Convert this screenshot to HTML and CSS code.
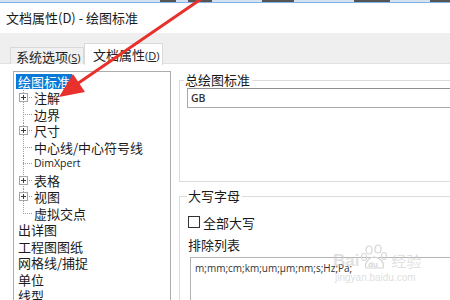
FILE: index.html
```html
<!DOCTYPE html>
<html lang="zh-CN">
<head>
<meta charset="utf-8">
<title>文档属性(D) - 绘图标准</title>
<link rel="stylesheet" href="styles.css">
</head>
<body>
<div class="topstrip">
  <span class="frag f1"></span><span class="frag f2"></span><span class="frag f3"></span><span class="frag f4"></span><span class="frag f5"></span>
</div>
<div class="titlebar">文档属性(D) - 绘图标准</div>
<div class="tabband">
  <div class="tab">系统选项<span class="acc">(<u>S</u>)</span></div>
  <div class="tab active">文档属性<span class="acc">(<u>D</u>)</span></div>
</div>
<div class="content">
  <div class="tree">
    <div class="row top"><span class="lbl sel">绘图标准</span></div>
    <div class="row child"><span class="twig"><span class="pm"></span></span><span class="lbl">注解</span></div>
    <div class="row child"><span class="twig"></span><span class="lbl">边界</span></div>
    <div class="row child"><span class="twig"><span class="pm"></span></span><span class="lbl">尺寸</span></div>
    <div class="row child"><span class="twig"></span><span class="lbl">中心线/中心符号线</span></div>
    <div class="row child"><span class="twig"></span><span class="lbl latin">DimXpert</span></div>
    <div class="row child"><span class="twig"><span class="pm"></span></span><span class="lbl">表格</span></div>
    <div class="row child"><span class="twig"><span class="pm"></span></span><span class="lbl">视图</span></div>
    <div class="row child"><span class="twig last"></span><span class="lbl">虚拟交点</span></div>
    <div class="row top"><span class="lbl">出详图</span></div>
    <div class="row top"><span class="lbl">工程图图纸</span></div>
    <div class="row top"><span class="lbl">网格线/捕捉</span></div>
    <div class="row top"><span class="lbl">单位</span></div>
    <div class="row top"><span class="lbl">线型</span></div>
  </div>
  <div class="panel">
    <fieldset class="group g1">
      <legend>总绘图标准</legend>
      <div class="field">GB</div>
    </fieldset>
    <fieldset class="group g2">
      <legend>大写字母</legend>
      <div class="check"><span class="box"></span><span>全部大写</span></div>
      <div class="caption">排除列表</div>
      <div class="memo">m;mm;cm;km;um;μm;nm;s;Hz;Pa;</div>
    </fieldset>
  </div>
</div>

<div class="watermark">
  <div class="wm-line"><span class="wm-bai">Bai</span><svg class="paw" width="30" height="26" viewBox="0 0 30 26"><g fill="none" stroke="#d6d6d6" stroke-width="1.2"><ellipse cx="9" cy="6" rx="3" ry="4"/><ellipse cx="18" cy="5" rx="3" ry="4"/><ellipse cx="4" cy="13" rx="2.5" ry="3.5"/><ellipse cx="24" cy="12" rx="2.5" ry="3.5"/><path d="M6 24 C4 18 10 13 14 13 C19 13 25 18 23 24 Z"/></g><text x="8" y="23" font-size="8" fill="#d6d6d6" font-family="Liberation Sans, sans-serif" font-weight="bold">du</text></svg><span class="wm-cn">经验</span></div>
  <div class="wm-url">jingyan.baidu.com</div>
</div>

<svg class="arrow" width="450" height="300" viewBox="0 0 450 300">
  <line x1="204" y1="-3" x2="77" y2="84" stroke="#e8302c" stroke-width="3" stroke-linecap="round"/>
  <polygon points="59,97 85,92 73,74" fill="#e8302c"/>
</svg>
</body>
</html>
```

FILE: styles.css
```css
html, body {
  margin: 0;
  padding: 0;
}
body {
  width: 450px;
  height: 300px;
  overflow: hidden;
  position: relative;
  background: #ffffff;
  font-family: "Noto Sans CJK SC", "Noto Sans", sans-serif;
  color: #1a1a1a;
}

.topstrip {
  height: 2px;
  background: #d3e2f2;
  border-bottom: 1px solid #86b3e3;
  display: flex;
  padding-left: 150px;
}
.frag {
  display: block;
  height: 2px;
  background: #555;
}
.f1 { width: 20px; margin-left: 10px; }
.f2 { width: 30px; margin-left: 12px; }
.f3 { width: 40px; margin-left: 50px; }
.f4 { width: 45px; margin-left: 60px; }
.f5 { width: 25px; margin-left: 40px; }

.titlebar {
  height: 30px;
  line-height: 30px;
  padding-left: 6px;
  font-size: 13px;
  color: #1a1a1a;
}

.tabband {
  height: 30px;
  background: #efefef;
  border-bottom: 1px solid #e2e2e2;
  display: flex;
  align-items: flex-end;
  padding-left: 10px;
}
.tab {
  box-sizing: border-box;
  height: 17px;
  width: 74px;
  margin-bottom: -1px;
  border: 1px solid #d9d9d9;
  border-bottom: none;
  background: #f0f0f0;
  font-size: 13px;
  line-height: 18px;
  padding-left: 5px;
  color: #222;
  white-space: nowrap;
}
.tab.active {
  height: 22px;
  width: 79px;
  background: #ffffff;
  line-height: 21px;
  padding-left: 8px;
  margin-bottom: -2px;
}
.acc {
  font-family: "Open Sans", "Liberation Sans", sans-serif;
  font-size: 11px;
}

.content {
  display: flex;
  height: 236px;
  background: #ffffff;
}

.tree {
  box-sizing: border-box;
  margin-left: 13px;
  margin-top: 7px;
  width: 158px;
  height: 260px;
  border: 1px solid #acacac;
  background: #ffffff;
  padding-top: 1px;
  flex: none;
}
.row {
  display: flex;
  align-items: center;
  height: 16.5px;
  font-size: 13px;
  color: #1a1a1a;
  white-space: nowrap;
}
.row.top { padding-left: 2px; }
.row.child { padding-left: 5px; }
.lbl {
  line-height: 15px;
  padding: 0 2px;
}
.lbl.sel {
  background: #0a78d7;
  color: #ffffff;
}
.lbl.latin {
  font-family: "Open Sans", "Liberation Sans", sans-serif;
  font-size: 10.5px;
}
.twig {
  width: 13px;
  align-self: stretch;
  flex: none;
  display: flex;
  align-items: center;
  background-image:
    repeating-linear-gradient(to bottom, #9c9c9c 0 1px, transparent 1px 2px),
    repeating-linear-gradient(to right, #9c9c9c 0 1px, transparent 1px 2px);
  background-size: 1px 100%, 9px 1px;
  background-position: 4px 0, 4px 50%;
  background-repeat: no-repeat;
}
.twig.last {
  background-size: 1px 50%, 9px 1px;
}
.pm {
  box-sizing: border-box;
  width: 9px;
  height: 9px;
  border: 1px solid #a5a5a5;
  background:
    linear-gradient(#3c3c3c, #3c3c3c) center / 5px 1px no-repeat,
    linear-gradient(#3c3c3c, #3c3c3c) center / 1px 5px no-repeat,
    #ffffff;
}

.panel {
  flex: 1;
  padding-left: 8px;
  display: flex;
  flex-direction: column;
}
.group {
  margin: 0 -30px 0 0;
  border: 1px solid #dcdcdc;
  padding: 1px 0 0 7px;
  min-width: 0;
}
.group legend {
  font-size: 13px;
  line-height: 14px;
  padding: 0 2px 0 1px;
  color: #1a1a1a;
}
.g1 {
  margin-top: 9px;
  padding-bottom: 73px;
}
.g1 legend { margin-left: -3px; }
.field {
  box-sizing: border-box;
  height: 20px;
  border: 1px solid #a8a8a8;
  border-top-color: #8f8f8f;
  font-family: "Open Sans", "Liberation Sans", sans-serif;
  font-size: 10.5px;
  font-weight: 600;
  color: #333;
  line-height: 18px;
  padding-left: 3px;
}
.g2 {
  margin-top: 7px;
  padding-left: 8px;
  height: 120px;
}
.g2 legend { margin-left: -1px; }
.check {
  display: flex;
  align-items: center;
  height: 16px;
  margin-top: 10px;
  font-size: 13px;
  gap: 3px;
}
.box {
  box-sizing: border-box;
  width: 12px;
  height: 12px;
  border: 1px solid #333;
  background: #fff;
}
.caption {
  margin-top: 7px;
  height: 16px;
  line-height: 16px;
  font-size: 13px;
}
.memo {
  margin-top: 4px;
  margin-left: 2px;
  height: 60px;
  border: 1px solid #b4b4b4;
  border-right: none;
  font-family: "Open Sans", "Liberation Sans", sans-serif;
  font-size: 10px;
  color: #333;
  padding: 3px 0 0 4px;
  line-height: 14px;
}

.watermark {
  position: absolute;
  left: 333px;
  top: 244px;
  color: #d8d8d8;
  font-family: "Liberation Sans", sans-serif;
  pointer-events: none;
}
.wm-line {
  display: flex;
  align-items: flex-end;
  gap: 1px;
}
.wm-bai {
  font-size: 17px;
  font-weight: bold;
  line-height: 18px;
  color: rgba(200, 200, 200, 0.55);
}
.wm-cn {
  font-size: 15px;
  line-height: 18px;
  font-family: "Noto Sans CJK SC", sans-serif;
  color: rgba(200, 200, 200, 0.55);
}
.wm-url {
  font-size: 10px;
  margin-top: 2px;
  padding-left: 2px;
  color: rgba(200, 200, 200, 0.6);
}

.arrow {
  position: absolute;
  left: 0;
  top: 0;
  pointer-events: none;
}
```
